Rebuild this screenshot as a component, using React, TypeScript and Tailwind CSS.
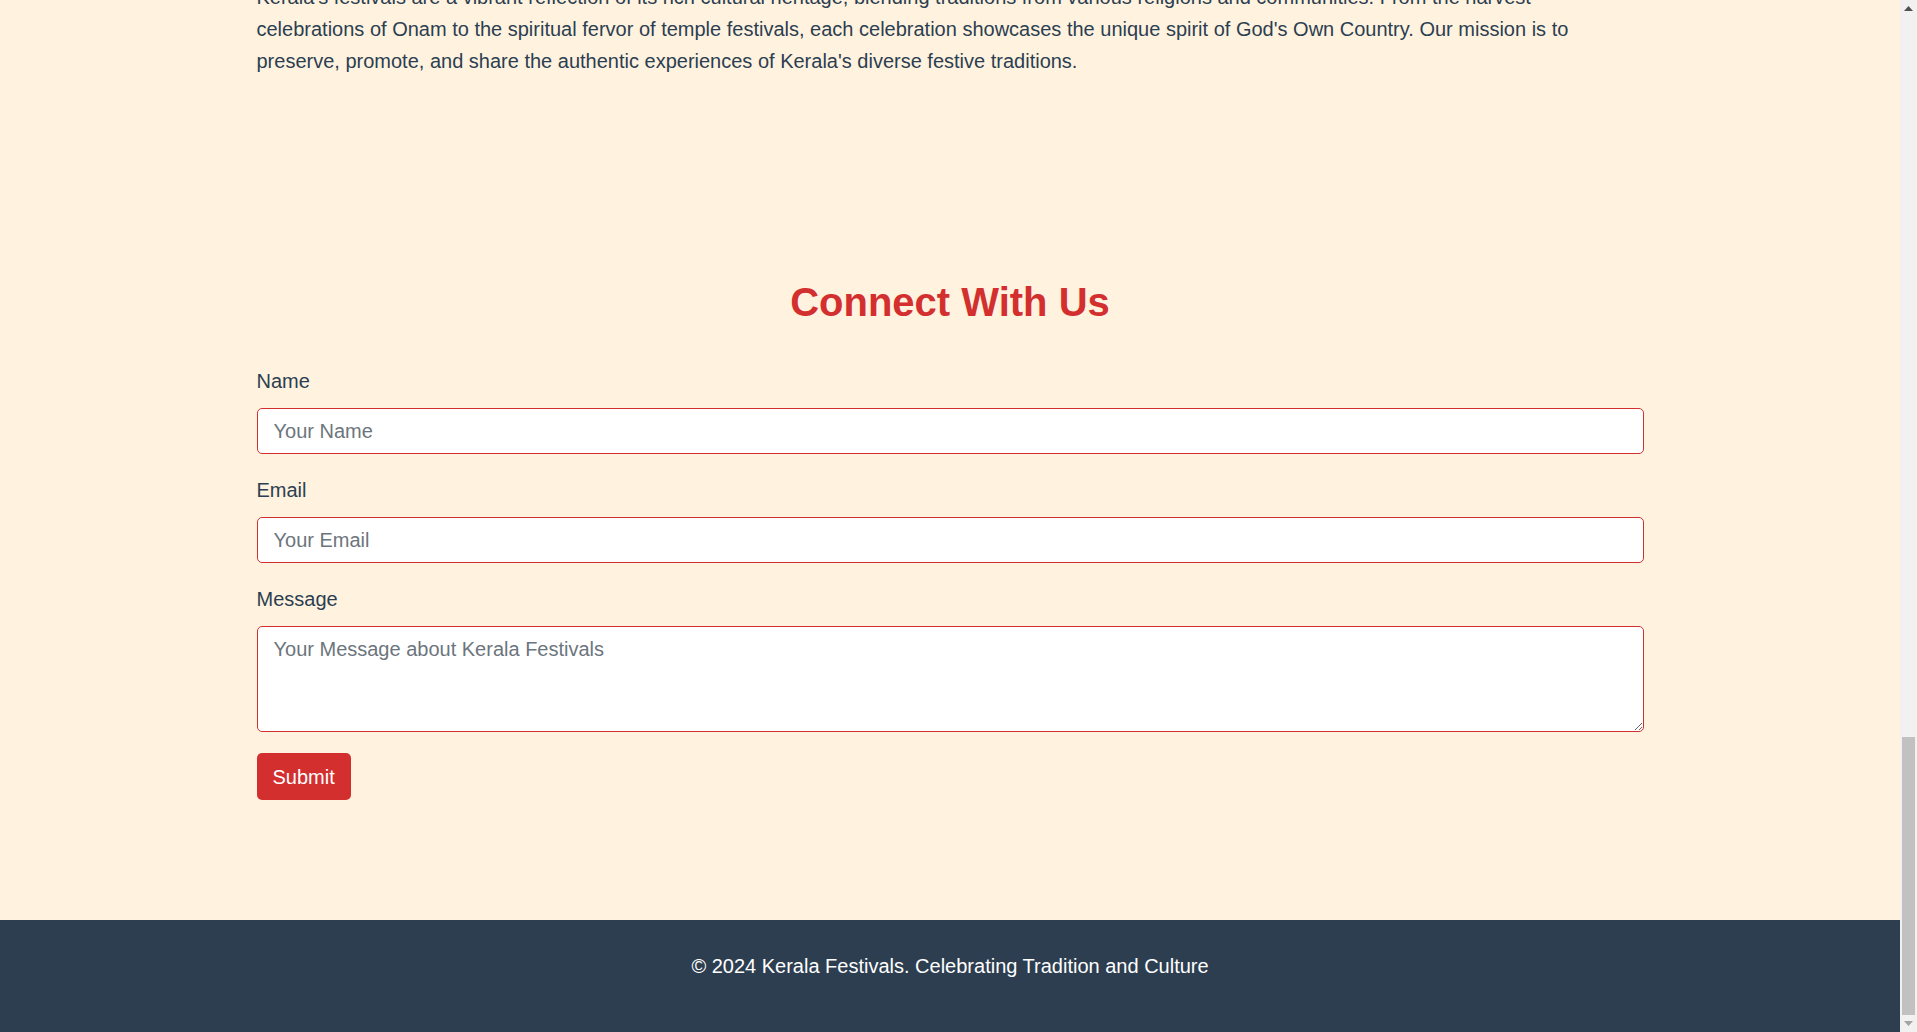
type FieldProps = {
  label: string;
  placeholder: string;
  type?: string;
};

const aboutText =
  "Kerala's festivals are a vibrant reflection of its rich cultural heritage, blending traditions from various religions and communities. From the harvest celebrations of Onam to the spiritual fervor of temple festivals, each celebration showcases the unique spirit of God's Own Country. Our mission is to preserve, promote, and share the authentic experiences of Kerala's diverse festive traditions.";

function Field({ label, placeholder, type = "text" }: FieldProps) {
  return (
    <div className="mb-[22px]">
      <label className="mb-[13px] block text-xl">{label}</label>
      <input
        className="block w-full rounded-[5px] border border-[#d32f2f] bg-white px-4 py-2 text-xl outline-none placeholder:text-[#6c757d]"
        placeholder={placeholder}
        type={type}
      />
    </div>
  );
}

// classic browser scrollbar, parked at the bottom of a long page
function Scrollbar() {
  return (
    <div className="flex w-[17px] shrink-0 flex-col bg-[#f1f1f1]">
      <div className="flex h-[17px] items-center justify-center">
        <svg height="5" viewBox="0 0 9 5" width="9">
          <path d="M4.5 0 9 5H0z" fill="#505050" />
        </svg>
      </div>
      <div className="flex flex-1 flex-col justify-end px-[2px] pl-[2px]">
        <div className="h-[278px] bg-[#c1c1c1]" />
      </div>
      <div className="flex h-[17px] items-center justify-center">
        <svg height="5" viewBox="0 0 9 5" width="9">
          <path d="M0 0h9L4.5 5z" fill="#a3a3a3" />
        </svg>
      </div>
    </div>
  );
}

export default function App() {
  return (
    <div className="flex h-[1032px] overflow-hidden bg-[#fff3e0] font-['Liberation_Sans',Arial,sans-serif] text-[#2c3e50]">
      <main className="flex min-w-0 flex-1 flex-col justify-end overflow-hidden">
        <section id="about">
          <div className="mx-auto w-[1387px]">
            <p className="text-xl leading-[1.6]">{aboutText}</p>
          </div>
        </section>

        <section className="pb-[120px] pt-[201px]" id="contact">
          <div className="mx-auto w-[1387px]">
            <h2 className="mb-[41px] text-center text-[40px] font-bold leading-[1.2] text-[#d32f2f]">
              Connect With Us
            </h2>
            <form onSubmit={(e) => e.preventDefault()}>
              <Field label="Name" placeholder="Your Name" />
              <Field label="Email" placeholder="Your Email" type="email" />
              <div className="mb-[21px]">
                <label className="mb-[13px] block text-xl">Message</label>
                <textarea
                  className="block h-[106px] w-full rounded-[5px] border border-[#d32f2f] bg-white px-4 py-2 text-xl outline-none placeholder:text-[#6c757d]"
                  placeholder="Your Message about Kerala Festivals"
                />
              </div>
              <button className="rounded-[5px] bg-[#d32f2f] px-4 py-[9.5px] text-xl text-white" type="submit">
                Submit
              </button>
            </form>
          </div>
        </section>

        <footer className="shrink-0 bg-[#2c3e50] pb-[52px] pt-8 text-center text-xl text-white">
          <p>© 2024 Kerala Festivals. Celebrating Tradition and Culture</p>
        </footer>
      </main>
      <Scrollbar />
    </div>
  );
}
